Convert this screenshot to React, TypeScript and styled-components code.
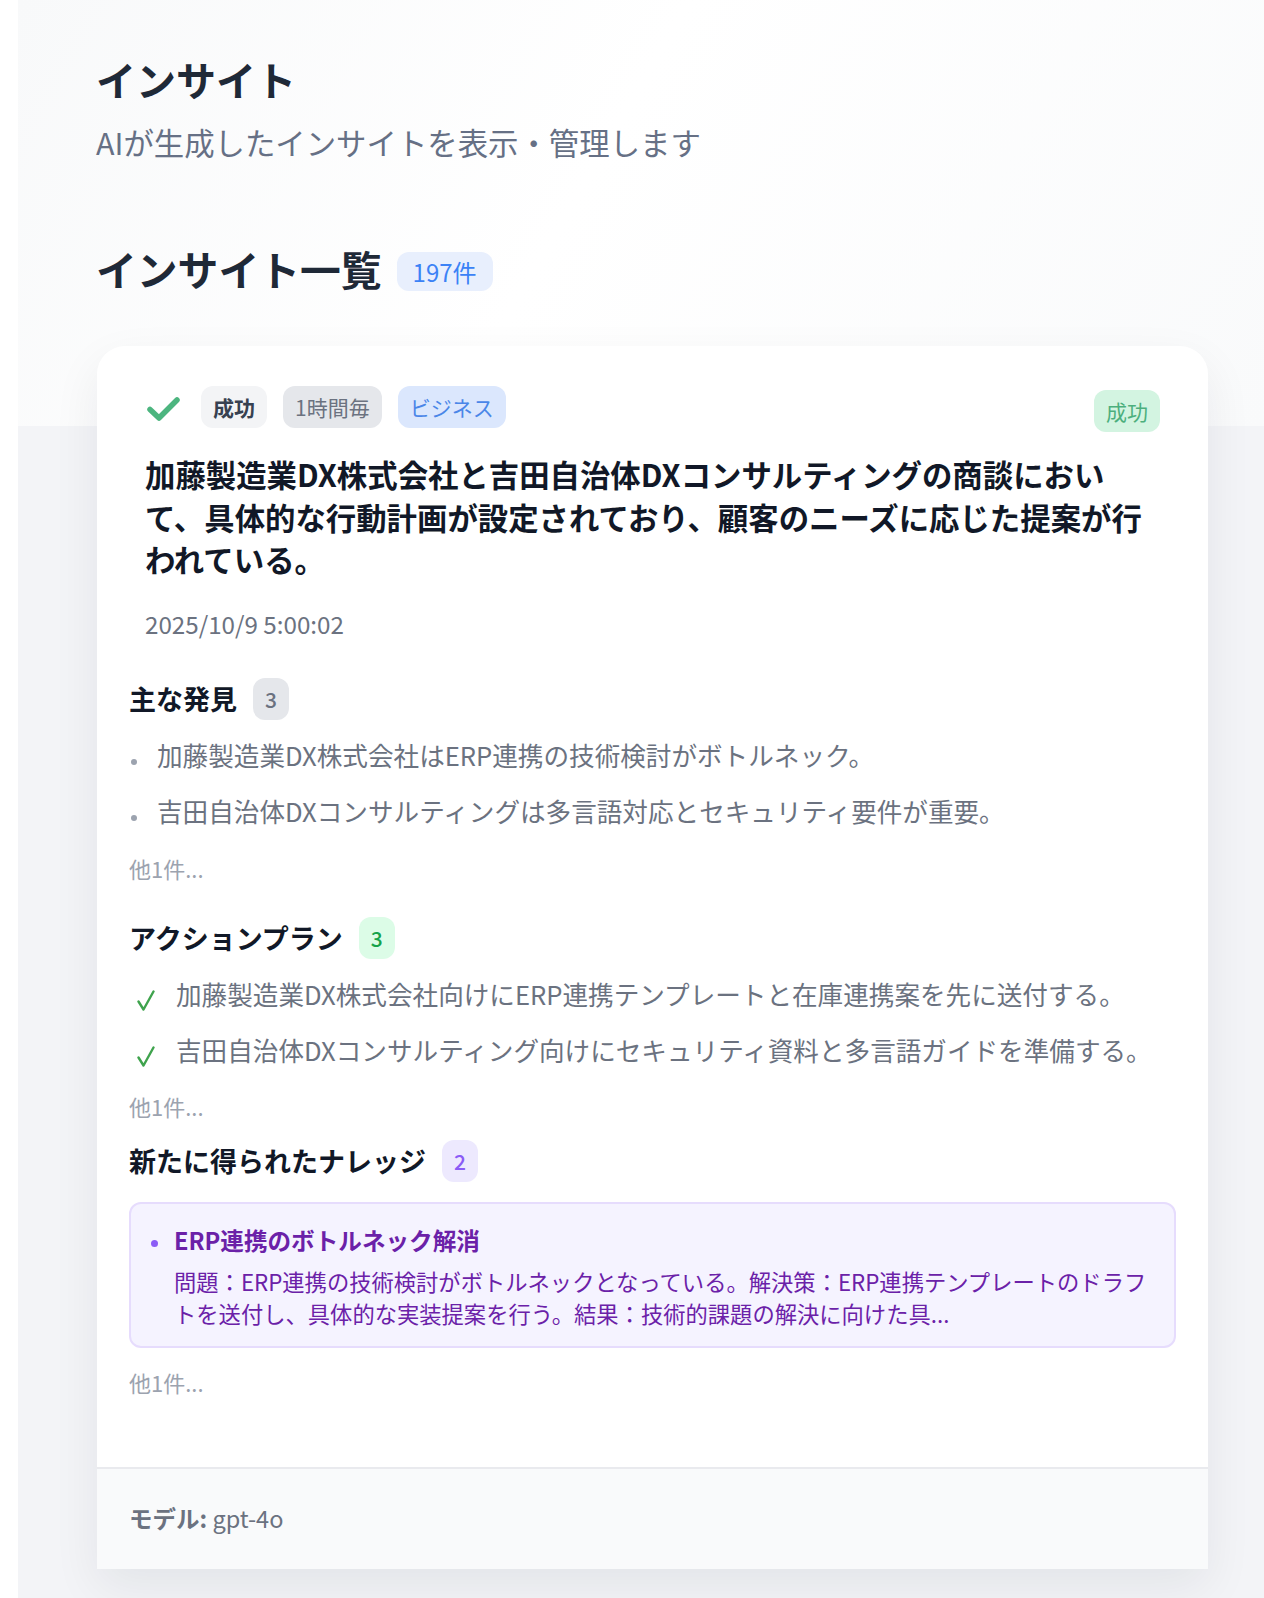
import React from "react";
import styled, { createGlobalStyle } from "styled-components";

const GlobalStyle = createGlobalStyle`
  html, body { margin: 0; padding: 0; background: #ffffff; }
  body {
    font-family: "Noto Sans CJK JP", "Noto Sans", sans-serif;
    -webkit-font-smoothing: antialiased;
  }
  * { box-sizing: border-box; }
`;

const Page = styled.div`
  margin-left: 18px;
  min-height: 1598px;
  padding: 0 56px 28px 79px;
  background:
    linear-gradient(120deg, #f8f9fa 0%, #ffffff 45%, #f9fafb 100%) top left / 100% 426px no-repeat,
    #f3f4f7;
`;

const Header = styled.header`
  padding-top: 55px;
`;

const PageTitle = styled.h1`
  margin: 0 0 0 -1px;
  font-size: 40px;
  line-height: 48px;
  font-weight: 700;
  color: #1f2937;
`;

const PageSubtitle = styled.p`
  margin: 18px 0 0 -1px;
  font-size: 30.4px;
  line-height: 42px;
  color: #667085;
`;

const ListHeading = styled.div`
  margin-top: 82px;
  display: flex;
  align-items: center;
  gap: 15px;
`;

const ListTitle = styled.h2`
  margin: 0 0 0 -1px;
  font-size: 40.8px;
  line-height: 48px;
  font-weight: 700;
  color: #1f2937;
`;

const CountPill = styled.span`
  display: inline-flex;
  align-items: center;
  height: 39px;
  padding: 0 16px;
  border-radius: 12px;
  background: #e8effd;
  color: #3b82f6;
  font-size: 24px;
  margin-top: 4px;
`;

const Card = styled.article`
  margin-top: 53px;
  background: #ffffff;
  border-radius: 28px 28px 0 0;
  box-shadow: 0 18px 48px rgba(15, 23, 42, 0.07);
  overflow: hidden;
`;

const CardBody = styled.div`
  padding: 40px 32px 68px;
`;

const HeaderBlock = styled.div`
  padding: 0 16px;
`;

const TopRow = styled.div`
  display: flex;
  justify-content: space-between;
  align-items: flex-start;
`;

const TagGroup = styled.div`
  display: flex;
  align-items: center;
  gap: 16px;
`;

type Tone = "plain" | "gray" | "blue" | "green";

const toneMap: Record<Tone, { bg: string; fg: string; weight: number }> = {
  plain: { bg: "#f3f4f6", fg: "#374151", weight: 700 },
  gray: { bg: "#e5e7eb", fg: "#6b7280", weight: 400 },
  blue: { bg: "#dbe7fd", fg: "#4a86e8", weight: 400 },
  green: { bg: "#d3f4e1", fg: "#4caf7d", weight: 400 },
};

const Tag = styled.span<{ $tone: Tone; $offset?: number }>`
  display: inline-flex;
  align-items: center;
  height: 42px;
  padding: 0 12px;
  border-radius: 12px;
  font-size: 21px;
  background: ${(p) => toneMap[p.$tone].bg};
  color: ${(p) => toneMap[p.$tone].fg};
  font-weight: ${(p) => toneMap[p.$tone].weight};
  margin-top: ${(p) => p.$offset ?? 0}px;
`;

const StatusIcon = styled.svg`
  width: 36px;
  height: 30px;
  margin-left: 1px;
  margin-right: 3px;
  margin-top: 3px;
`;

const InsightTitle = styled.h3`
  margin: 21px 0 0;
  font-size: 30.4px;
  line-height: 42.5px;
  font-weight: 700;
  color: #111827;
`;

const DateText = styled.div`
  margin-top: 25px;
  font-size: 24.2px;
  line-height: 36px;
  color: #6b7280;
`;

const Section = styled.section<{ $gap: number }>`
  margin-top: ${(p) => p.$gap}px;
`;

const SectionHeader = styled.div`
  display: flex;
  align-items: center;
  gap: 16px;
`;

const SectionTitle = styled.h4`
  margin: 0;
  font-size: 27px;
  line-height: 40px;
  font-weight: 700;
  color: #111827;
`;

type CountTone = "gray" | "green" | "purple";
const countMap: Record<CountTone, { bg: string; fg: string }> = {
  gray: { bg: "#e5e7eb", fg: "#6b7280" },
  green: { bg: "#dcfce7", fg: "#16a34a" },
  purple: { bg: "#ede9fe", fg: "#8b5cf6" },
};

const Count = styled.span<{ $tone: CountTone }>`
  display: inline-flex;
  align-items: center;
  justify-content: center;
  height: 42px;
  padding: 0 12px;
  border-radius: 12px;
  font-size: 21px;
  font-weight: 500;
  background: ${(p) => countMap[p.$tone].bg};
  color: ${(p) => countMap[p.$tone].fg};
`;

const ItemList = styled.ul`
  list-style: none;
  margin: 17px 0 0;
  padding: 0;
  display: flex;
  flex-direction: column;
  gap: 20px;
`;

const Item = styled.li`
  display: flex;
  align-items: flex-start;
  font-size: 25.6px;
  line-height: 36px;
  color: #6b7280;
`;

const Dot = styled.span`
  flex: none;
  width: 6px;
  height: 6px;
  border-radius: 50%;
  background: #9ca3af;
  margin: 22px 20px 0 2px;
`;

const ActionCheck = styled.svg`
  flex: none;
  width: 18px;
  height: 21px;
  margin: 14px 21px 0 8px;
`;

const MoreText = styled.div<{ $gap: number }>`
  margin-top: ${(p) => p.$gap}px;
  font-size: 22px;
  line-height: 33px;
  color: #9ca3af;
`;

const KnowledgeBox = styled.div`
  margin-top: 20px;
  background: #f5f3ff;
  border: 2px solid #e6dcfd;
  border-radius: 12px;
  padding: 18px 24px 16px 20px;
`;

const KnowledgeHead = styled.div`
  display: flex;
  align-items: flex-start;
`;

const KnowledgeDot = styled.span`
  flex: none;
  width: 7px;
  height: 7px;
  border-radius: 50%;
  background: #8b5cf6;
  margin: 18px 16px 0 0;
`;

const KnowledgeTitle = styled.div`
  font-size: 23.6px;
  line-height: 36px;
  font-weight: 700;
  color: #6b21a8;
`;

const KnowledgeText = styled.p`
  margin: 7px 0 0 23px;
  font-size: 22.3px;
  line-height: 32.5px;
  color: #6b21a8;
`;

const Footer = styled.footer`
  border-top: 2px solid #e9eaee;
  background: #f9fafb;
  padding: 32px 32px 34px;
  font-size: 23.5px;
  line-height: 34px;
  color: #6b7280;
`;

const FooterLabel = styled.span`
  font-weight: 700;
`;

const CheckBold = () => (
  <StatusIcon viewBox="0 0 36 30" fill="none">
    <path d="M4 15.5 L13 24 L31 6" stroke="#4cb57f" strokeWidth="5.5" strokeLinecap="round" strokeLinejoin="round" />
  </StatusIcon>
);

const CheckThin = () => (
  <ActionCheck viewBox="0 0 18 21" fill="none">
    <path d="M1.5 11.5 L6.5 19.5 L16.5 1.5" stroke="#3fa34d" strokeWidth="2.4" strokeLinecap="round" strokeLinejoin="round" />
  </ActionCheck>
);

const findings = [
  "加藤製造業DX株式会社はERP連携の技術検討がボトルネック。",
  "吉田自治体DXコンサルティングは多言語対応とセキュリティ要件が重要。",
];

const actions = [
  "加藤製造業DX株式会社向けにERP連携テンプレートと在庫連携案を先に送付する。",
  "吉田自治体DXコンサルティング向けにセキュリティ資料と多言語ガイドを準備する。",
];

export default function App() {
  return (
    <>
      <GlobalStyle />
      <Page>
        <Header>
          <PageTitle>インサイト</PageTitle>
          <PageSubtitle>AIが生成したインサイトを表示・管理します</PageSubtitle>
        </Header>

        <ListHeading>
          <ListTitle>インサイト一覧</ListTitle>
          <CountPill>197件</CountPill>
        </ListHeading>

        <Card>
          <CardBody>
            <HeaderBlock>
              <TopRow>
                <TagGroup>
                  <CheckBold />
                  <Tag $tone="plain">成功</Tag>
                  <Tag $tone="gray">1時間毎</Tag>
                  <Tag $tone="blue">ビジネス</Tag>
                </TagGroup>
                <Tag $tone="green" $offset={4}>成功</Tag>
              </TopRow>
              <InsightTitle>
                加藤製造業DX株式会社と吉田自治体DXコンサルティングの商談において、具体的な行動計画が設定されており、顧客のニーズに応じた提案が行われている。
              </InsightTitle>
              <DateText>2025/10/9 5:00:02</DateText>
            </HeaderBlock>

            <Section $gap={36}>
              <SectionHeader>
                <SectionTitle>主な発見</SectionTitle>
                <Count $tone="gray">3</Count>
              </SectionHeader>
              <ItemList>
                {findings.map((f) => (
                  <Item key={f}>
                    <Dot />
                    <span>{f}</span>
                  </Item>
                ))}
              </ItemList>
              <MoreText $gap={23}>他1件...</MoreText>
            </Section>

            <Section $gap={32}>
              <SectionHeader>
                <SectionTitle>アクションプラン</SectionTitle>
                <Count $tone="green">3</Count>
              </SectionHeader>
              <ItemList>
                {actions.map((a) => (
                  <Item key={a}>
                    <CheckThin />
                    <span>{a}</span>
                  </Item>
                ))}
              </ItemList>
              <MoreText $gap={22}>他1件...</MoreText>
            </Section>

            <Section $gap={17}>
              <SectionHeader>
                <SectionTitle>新たに得られたナレッジ</SectionTitle>
                <Count $tone="purple">2</Count>
              </SectionHeader>
              <KnowledgeBox>
                <KnowledgeHead>
                  <KnowledgeDot />
                  <KnowledgeTitle>ERP連携のボトルネック解消</KnowledgeTitle>
                </KnowledgeHead>
                <KnowledgeText>
                  問題：ERP連携の技術検討がボトルネックとなっている。解決策：ERP連携テンプレートのドラフトを送付し、具体的な実装提案を行う。結果：技術的課題の解決に向けた具...
                </KnowledgeText>
              </KnowledgeBox>
              <MoreText $gap={18}>他1件...</MoreText>
            </Section>
          </CardBody>
          <Footer>
            <FooterLabel>モデル:</FooterLabel> gpt-4o
          </Footer>
        </Card>
      </Page>
    </>
  );
}
